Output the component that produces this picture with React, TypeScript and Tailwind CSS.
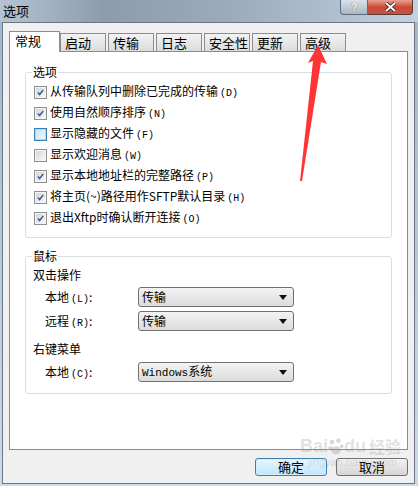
import React from "react";

type CheckState = "checked" | "hot" | "unchecked";

const options: { label: string; key: string; state: CheckState }[] = [
  { label: "从传输队列中删除已完成的传输", key: "(D)", state: "checked" },
  { label: "使用自然顺序排序", key: "(N)", state: "checked" },
  { label: "显示隐藏的文件", key: "(F)", state: "hot" },
  { label: "显示欢迎消息", key: "(W)", state: "unchecked" },
  { label: "显示本地地址栏的完整路径", key: "(P)", state: "checked" },
  { label: "将主页(~)路径用作SFTP默认目录", key: "(H)", state: "checked" },
  { label: "退出Xftp时确认断开连接", key: "(O)", state: "checked" },
];

const tabs = ["启动", "传输", "日志", "安全性", "更新", "高级"];

const CheckBox = ({ state }: { state: CheckState }) => {
  const outer =
    state === "hot" ? "border-[#3c7fb1]" : "border-[#8f8f8f]";
  const inner =
    state === "hot"
      ? "bg-gradient-to-br from-[#c9e6f8] to-[#eaf6fd] border-[#a9d7f5]"
      : "bg-gradient-to-br from-[#d6d6d6] to-[#f8f8f8] border-[#f4f4f4]";
  return (
    <div className={`w-[13px] h-[13px] border ${outer} bg-white p-0`}>
      <div className={`w-full h-full border ${inner} relative`}>
        {state === "checked" && (
          <svg viewBox="0 0 11 11" className="absolute inset-0 w-full h-full">
            <path
              d="M2.3 5.6 L4.4 8 L8.8 2.4"
              fill="none"
              stroke="#3a5a9e"
              strokeWidth="1.8"
            />
          </svg>
        )}
      </div>
    </div>
  );
};

const Select = ({ value }: { value: React.ReactNode }) => (
  <div className="w-[156px] h-[20px] border border-[#707070] rounded-[3px] bg-gradient-to-b from-[#f3f3f3] to-[#dcdcdc] flex items-center justify-between pl-[3px] pr-[6px]">
    <span className="leading-[14px]">{value}</span>
    <svg width="8" height="5" viewBox="0 0 8 5">
      <path d="M0 0 H8 L4 5 Z" fill="#111" />
    </svg>
  </div>
);

const Key = ({ children }: { children: React.ReactNode }) => (
  <span className="ml-[2px] text-[10px] font-['Liberation_Mono',monospace]">{children}</span>
);

export default function App() {
  return (
    <div className="relative w-[418px] h-[486px] overflow-hidden bg-gradient-to-b from-[#9fb6cc] to-[#c8dcef] text-[12px] text-black font-['Noto_Sans_CJK_SC',sans-serif]">
      {/* title bar */}
      <div className="h-[22px] flex items-start justify-between bg-[linear-gradient(90deg,#b4c4d3_0%,#8b9cad_25%,#9aabbb_55%,#aebfcf_80%,#c4d2df_100%)]">
        <span className="ml-[3px] mt-[2px] text-[13px] leading-[17px]">选项</span>
        <div className="flex mr-[5px]">
          <div className="w-[28px] h-[15px] border border-[#5b6b7c] border-t-0 rounded-bl-[4px] bg-gradient-to-b from-[#d9e2ea] to-[#a9b8c6] flex items-center justify-center text-[11px] font-bold text-white leading-[12px] font-['Liberation_Sans',sans-serif] [text-shadow:0_0_1px_#333]">
            ?
          </div>
          <div className="w-[45px] h-[15px] border border-[#5b3a36] border-t-0 border-l-0 rounded-br-[4px] bg-gradient-to-b from-[#e8a291] via-[#c9493a] to-[#c4533f] flex items-center justify-center">
            <svg width="13" height="10" viewBox="0 0 13 10">
              <path d="M2 1 L11 9 M11 1 L2 9" stroke="#3b1b16" strokeWidth="3.6" />
              <path d="M2 1 L11 9 M11 1 L2 9" stroke="#fff" strokeWidth="2" />
            </svg>
          </div>
        </div>
      </div>

      {/* dialog body */}
      <div className="ml-[2px] mr-[3px] h-[462px] border border-[#6d7784] bg-[#f0f0f0] flex flex-col pt-[8px] pl-[6px]">
        {/* tabs */}
        <div className="flex items-end h-[20px]">
          <div className="relative z-10 w-[51px] h-[21px] -mb-[1px] border border-b-0 border-[#898c95] bg-white pl-[5px] text-[13px] leading-[18px]">
            常规
          </div>
          <div className="flex gap-[2px]">
            {tabs.map((t) => (
              <div
                key={t}
                className="w-[46px] h-[18px] border border-b-0 border-[#898c95] bg-gradient-to-b from-[#f3f3f3] to-[#dcdcdc] pl-[4px] text-[13px] leading-[17px] whitespace-nowrap overflow-hidden"
              >
                {t}
              </div>
            ))}
          </div>
        </div>

        {/* tab panel */}
        <div className="w-[399px] h-[399px] border border-[#898c95] bg-white pl-[15px] pt-[12px]">
          <fieldset className="w-[367px] border border-[#d5dfe5] rounded-[3px] pl-[8px] pb-[8px]">
            <legend className="ml-[-2px] px-[1px] text-[12px] leading-[16px]">选项</legend>
            <div className="mt-[2px] flex flex-col">
              {options.map((o) => (
                <div key={o.key} className="h-[21px] flex items-center gap-[3px]">
                  <CheckBox state={o.state} />
                  <span className="leading-[14px]">
                    {o.label}
                    <Key>{o.key}</Key>
                  </span>
                </div>
              ))}
            </div>
          </fieldset>

          <fieldset className="mt-[10px] w-[367px] border border-[#d5dfe5] rounded-[3px] pl-[7px] pb-[11px]">
            <legend className="ml-[-1px] px-[1px] text-[12px] leading-[16px]">鼠标</legend>
            <div className="mt-[3px] leading-[16px]">双击操作</div>
            <div className="mt-[4px] flex items-center">
              <span className="w-[105px] pl-[12px]">
                本地<Key>(L)</Key>:
              </span>
              <Select value="传输" />
            </div>
            <div className="mt-[4px] flex items-center">
              <span className="w-[105px] pl-[12px]">
                远程<Key>(R)</Key>:
              </span>
              <Select value="传输" />
            </div>
            <div className="mt-[10px] leading-[16px]">右键菜单</div>
            <div className="mt-[5px] flex items-center">
              <span className="w-[105px] pl-[12px]">
                本地<Key>(C)</Key>:
              </span>
              <Select
                value={
                  <>
                    <span className="font-['Liberation_Mono',monospace] text-[11px]">Windows</span>系统
                  </>
                }
              />
            </div>
          </fieldset>
        </div>

        {/* buttons */}
        <div className="mt-[8px] flex justify-end gap-[9px] pr-[6px]">
          <button className="w-[72px] h-[18px] border border-[#3c7fb1] rounded-[3px] bg-gradient-to-b from-[#eaf6fd] to-[#bee6fd] text-[13px] leading-[14px] shadow-[inset_0_0_0_1px_#cfeefd]">
            确定
          </button>
          <button className="w-[72px] h-[18px] border border-[#707070] rounded-[3px] bg-gradient-to-b from-[#f2f2f2] to-[#d5d5d5] text-[13px] leading-[14px]">
            取消
          </button>
        </div>
      </div>

      {/* baidu watermark */}
      <div className="absolute left-[300px] top-[436px] w-[96px] flex flex-col items-start whitespace-nowrap text-[rgba(150,150,150,0.3)] pointer-events-none">
        <div className="flex items-end font-['Liberation_Sans',sans-serif] font-bold text-[18px] leading-[20px]">
          <span>Bai</span>
          <svg width="16" height="18" viewBox="0 0 20 22">
            <circle cx="5" cy="5" r="3" fill="rgba(150,150,150,0.35)" />
            <circle cx="13" cy="3" r="3" fill="rgba(150,150,150,0.35)" />
            <circle cx="3" cy="12" r="2.5" fill="rgba(150,150,150,0.35)" />
            <circle cx="17" cy="10" r="2.5" fill="rgba(150,150,150,0.35)" />
            <ellipse cx="10" cy="15" rx="6" ry="5" fill="rgba(150,150,150,0.35)" />
          </svg>
          <span>du</span>
          <span className="ml-[3px] text-[16px] font-['Noto_Sans_CJK_SC',sans-serif]">经验</span>
        </div>
        <div className="ml-[8px] font-['Liberation_Sans',sans-serif] text-[11px] leading-[13px]">
          jingyan.baidu.com
        </div>
      </div>

      {/* red arrow */}
      <svg
        className="absolute left-0 top-0 pointer-events-none"
        width="418"
        height="486"
        viewBox="0 0 418 486"
      >
        <polygon
          points="318,45 327,64 321,62 302,181 300,181 313,61 308,63"
          fill="#ff3535"
        />
      </svg>
    </div>
  );
}
